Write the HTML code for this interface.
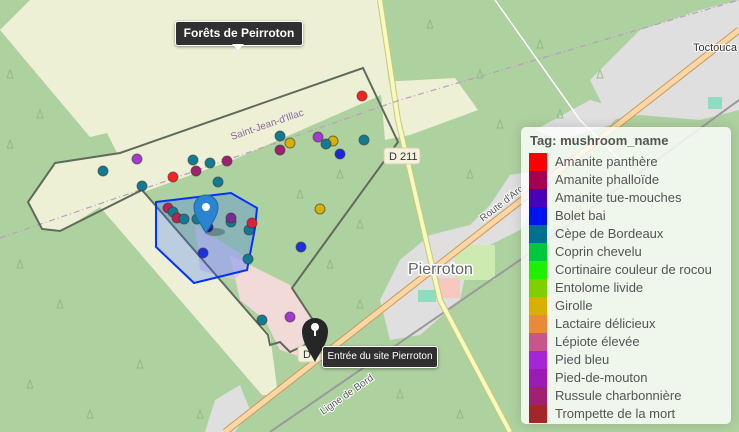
<!DOCTYPE html>
<html><head><meta charset="utf-8"><style>
html,body{margin:0;padding:0;width:739px;height:432px;overflow:hidden;font-family:"Liberation Sans",sans-serif}
#map{position:absolute;left:0;top:0}
.legend{position:absolute;left:521px;top:127px;width:210px;height:297px;background:rgba(255,255,255,0.8);border-radius:5px;box-shadow:0 0 12px rgba(0,0,0,0.15)}
.legend h4{margin:0;position:absolute;left:9px;top:6px;font-size:13px;color:#555;font-weight:bold}
.row{position:absolute;left:8px;height:18px;font-size:13px;color:#555;line-height:18px}
.row i{display:inline-block;width:18px;height:18px;vertical-align:top;margin-right:8px}
.tip{position:absolute;background:#303030;color:#fff;font-size:12px;border-radius:3px;border:1px solid #fff;box-shadow:0 1px 3px rgba(0,0,0,.4);white-space:nowrap}
</style></head><body>
<svg id="map" width="739" height="432" viewBox="0 0 739 432" font-family="Liberation Sans, sans-serif">
<rect width="739" height="432" fill="#aed1a0"/>
<polygon points="0,30 30,0 378,0 390,90 377,97 233,160 144,192 270,335 278,395 262,395 100,207 60,232 42,229 28,202 55,163 117,153 107,133 90,137" fill="#eef0d6"/>
<polygon points="144,192 233,160 377,97 398,142 292,288 230,255 195,225" fill="#aed1a0"/>
<polygon points="380,82 455,78 478,110 410,135 385,140" fill="#eef0d6"/>
<polygon points="230,255 290,285 315,325 310,360 280,350 265,320 240,300" fill="#f2dad8"/>
<polygon points="195,225 250,260 235,280 200,270" fill="#d7c8e8" opacity=".7"/>
<polygon points="640,30 700,10 739,0 739,110 700,120 640,115 610,120 590,80 620,50" fill="#e0dfdf"/>
<polygon points="510,175 540,170 535,205 520,230 470,255 460,300 420,335 390,340 380,300 400,260 430,235 470,225 490,205" fill="#e0dfdf"/>
<polygon points="590,100 625,110 610,125 560,140 535,130" fill="#e0dfdf"/>
<polygon points="215,400 240,385 250,410 235,432 205,432" fill="#e0dfdf"/>
<rect x="455" y="245" width="40" height="35" fill="#cdebb0"/>
<rect x="418" y="290" width="18" height="12" fill="#8fdcc0"/>
<rect x="708" y="97" width="14" height="12" fill="#8fdcc0"/>
<rect x="438" y="278" width="22" height="20" fill="#f8c7c0"/>
<g stroke="#8cb27e" stroke-width="1" fill="none" opacity=".8">
<path d="M20,260 l-3,8 h6 z M60,300 l-3,8 h6 z M30,380 l-3,8 h6 z M90,410 l-3,8 h6 z M140,360 l-3,8 h6 z M430,20 l-3,8 h6 z M480,70 l-3,8 h6 z M540,40 l-3,8 h6 z M500,120 l-3,8 h6 z M560,110 l-3,8 h6 z M470,170 l-3,8 h6 z M360,220 l-3,8 h6 z M330,260 l-3,8 h6 z M360,300 l-3,8 h6 z M600,70 l-3,8 h6 z M400,390 l-3,8 h6 z M460,410 l-3,8 h6 z M10,70 l-3,8 h6 z M40,110 l-3,8 h6 z M10,140 l-3,8 h6 z M200,410 l-3,8 h6 z M300,190 l-3,8 h6 z M340,170 l-3,8 h6 z"/>
</g>
<path d="M225,432 L739,30" stroke="#c89a5a" stroke-width="7" fill="none"/>
<path d="M225,432 L739,30" stroke="#fcd6a4" stroke-width="5" fill="none"/>
<path d="M270,432 L520,260 L739,100" stroke="#9a9a9a" stroke-width="2" fill="none"/>
<path d="M380,0 L398,120 L440,300 L510,432" stroke="#c8c87a" stroke-width="6" fill="none"/>
<path d="M380,0 L398,120 L440,300 L510,432" stroke="#f7fabf" stroke-width="4" fill="none"/>
<path d="M0,238 L140,190 L400,100 L739,0" stroke="#b89ec0" stroke-width="1.2" stroke-dasharray="6,3,1,3" fill="none"/>
<path d="M495,0 L580,120 L660,200" stroke="#fff" stroke-width="1.5" fill="none"/>
<polygon points="55,163 120,153 363,68 398,142 292,288 313,320 305,345 290,352 280,342 270,345 268,335 142,190 60,231 42,229 28,202" fill="none" stroke="#606a5c" stroke-width="2"/>
<polygon points="156,202 231,193 257,208 255,228 247,270 194,283 156,247" fill="rgba(40,100,255,0.25)" stroke="#0033ff" stroke-width="2"/>
<g stroke-width="1" stroke-opacity=".6" stroke="#333">
<circle cx="362" cy="96" r="5" fill="#ff2020"/>
<circle cx="280" cy="136" r="5" fill="#127a92"/>
<circle cx="290" cy="143" r="5" fill="#d8b000"/>
<circle cx="280" cy="150" r="5" fill="#a0216f"/>
<circle cx="318" cy="137" r="5" fill="#a53acd"/>
<circle cx="333" cy="141" r="5" fill="#d8b000"/>
<circle cx="326" cy="144" r="5" fill="#127a92"/>
<circle cx="340" cy="154" r="5" fill="#1a28e0"/>
<circle cx="364" cy="140" r="5" fill="#127a92"/>
<circle cx="137" cy="159" r="5" fill="#a53acd"/>
<circle cx="103" cy="171" r="5" fill="#127a92"/>
<circle cx="142" cy="186" r="5" fill="#127a92"/>
<circle cx="173" cy="177" r="5" fill="#ff2020"/>
<circle cx="193" cy="160" r="5" fill="#127a92"/>
<circle cx="196" cy="171" r="5" fill="#a0216f"/>
<circle cx="210" cy="163" r="5" fill="#127a92"/>
<circle cx="227" cy="161" r="5" fill="#a0216f"/>
<circle cx="218" cy="182" r="5" fill="#127a92"/>
<circle cx="320" cy="209" r="5" fill="#d8b000"/>
<circle cx="168" cy="208" r="5" fill="#c0204f"/>
<circle cx="173" cy="212" r="5" fill="#127a92"/>
<circle cx="177" cy="218" r="5" fill="#c0204f"/>
<circle cx="184" cy="219" r="5" fill="#127a92"/>
<circle cx="197" cy="219" r="5" fill="#127a92"/>
<circle cx="208" cy="227" r="5" fill="#1a28c0"/>
<circle cx="231" cy="222" r="5" fill="#127a92"/>
<circle cx="231" cy="218" r="5" fill="#7a2a90"/>
<circle cx="249" cy="230" r="5" fill="#127a92"/>
<circle cx="252" cy="223" r="5" fill="#e0203a"/>
<circle cx="203" cy="253" r="5" fill="#2030e0"/>
<circle cx="301" cy="247" r="5" fill="#2030e0"/>
<circle cx="248" cy="259" r="5" fill="#127a92"/>
<circle cx="262" cy="320" r="5" fill="#127a92"/>
<circle cx="290" cy="317" r="5" fill="#a53acd"/>
</g>
<rect x="384" y="148" width="36" height="16" rx="3" fill="#f4f1dc" stroke="#d8d2b0"/>
<text x="389" y="160" font-size="11" fill="#333">D 211</text>
<rect x="298" y="346" width="22" height="16" rx="3" fill="#f4f1dc" stroke="#d8d2b0"/>
<text x="303" y="358" font-size="11" fill="#333">D</text>
<text x="232" y="140" font-size="10" fill="#8b6c9a" transform="rotate(-19 232 140)">Saint-Jean-d'Illac</text>
<text x="483" y="222" font-size="10" fill="#555" transform="rotate(-38 483 222)" stroke="#fff" stroke-width="2" paint-order="stroke">Route d'Arc</text>
<text x="323" y="415" font-size="10" fill="#555" transform="rotate(-35 323 415)" stroke="#fff" stroke-width="2" paint-order="stroke">Ligne de Bord</text>
<text x="408" y="274" font-size="16" fill="#666" stroke="#fff" stroke-width="3" paint-order="stroke">Pierroton</text>
<text x="693" y="51" font-size="11" fill="#333" stroke="#fff" stroke-width="2" paint-order="stroke">Toctouca</text>
<ellipse cx="215" cy="232" rx="10" ry="4" fill="rgba(0,0,0,.25)"/>
<path d="M206,233 C201,224 194,216 194,207 A12,12 0 0 1 218,207 C218,216 211,224 206,233 Z" fill="#2a84cf" stroke="#1f6aa8"/>
<circle cx="206" cy="207" r="4" fill="#fff"/>
<path d="M315,362 C310,352 302,343 302,331 A13,13 0 0 1 328,331 C328,343 320,352 315,362 Z" fill="#262626"/>
<circle cx="315" cy="327" r="4" fill="#fff"/>
<rect x="314" y="328" width="2" height="8" fill="#fff"/>
</svg>
<div class="tip" style="left:175px;top:21px;width:126px;height:23px;line-height:23px;text-align:center;font-weight:bold;font-size:12px">Forêts de Peirroton</div>
<div style="position:absolute;left:232px;top:44px;width:0;height:0;border-left:6px solid transparent;border-right:6px solid transparent;border-top:6px solid #fff"></div>
<div class="tip" style="left:322px;top:346px;width:114px;height:20px;line-height:20px;text-align:center;font-size:10px">Entrée du site Pierroton</div>
<div class="legend">
<h4>Tag: mushroom_name</h4>
<div class="row" style="top:26px"><i style="background:#ff0000"></i>Amanite panthère</div>
<div class="row" style="top:44px"><i style="background:#a50050"></i>Amanite phalloïde</div>
<div class="row" style="top:62px"><i style="background:#4800b8"></i>Amanite tue-mouches</div>
<div class="row" style="top:80px"><i style="background:#0014ef"></i>Bolet bai</div>
<div class="row" style="top:98px"><i style="background:#006f90"></i>Cèpe de Bordeaux</div>
<div class="row" style="top:116px"><i style="background:#00c83c"></i>Coprin chevelu</div>
<div class="row" style="top:134px"><i style="background:#1ff000"></i>Cortinaire couleur de rocou</div>
<div class="row" style="top:152px"><i style="background:#7fd000"></i>Entolome livide</div>
<div class="row" style="top:170px"><i style="background:#d8b000"></i>Girolle</div>
<div class="row" style="top:188px"><i style="background:#e88a38"></i>Lactaire délicieux</div>
<div class="row" style="top:206px"><i style="background:#c95688"></i>Lépiote élevée</div>
<div class="row" style="top:224px"><i style="background:#a526d8"></i>Pied bleu</div>
<div class="row" style="top:242px"><i style="background:#9a1cb5"></i>Pied-de-mouton</div>
<div class="row" style="top:260px"><i style="background:#a0216f"></i>Russule charbonnière</div>
<div class="row" style="top:278px"><i style="background:#a52628"></i>Trompette de la mort</div>
</div>
</body></html>
